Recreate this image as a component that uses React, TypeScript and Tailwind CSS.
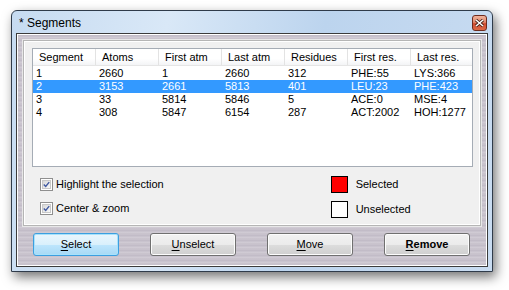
import React from "react";

type Segment = {
    id: number;
    atoms: number;
    firstAtm: number;
    lastAtm: number;
    residues: number;
    firstRes: string;
    lastRes: string;
};

const segments: Segment[] = [
    { id: 1, atoms: 2660, firstAtm: 1, lastAtm: 2660, residues: 312, firstRes: "PHE:55", lastRes: "LYS:366" },
    { id: 2, atoms: 3153, firstAtm: 2661, lastAtm: 5813, residues: 401, firstRes: "LEU:23", lastRes: "PHE:423" },
    { id: 3, atoms: 33, firstAtm: 5814, lastAtm: 5846, residues: 5, firstRes: "ACE:0", lastRes: "MSE:4" },
    { id: 4, atoms: 308, firstAtm: 5847, lastAtm: 6154, residues: 287, firstRes: "ACT:2002", lastRes: "HOH:1277" },
];

const columns = ["Segment", "Atoms", "First atm", "Last atm", "Residues", "First res.", "Last res."];

function CheckBox({ label }: { label: string }) {
    return (
        <div className="flex items-center h-[13px]">
            <div className="w-[13px] h-[13px] border border-[#8f8f8f] bg-white p-px">
                <div className="w-full h-full bg-gradient-to-br from-[#d8d8d8] to-[#f8f8f8] border border-[#c8c8c8] flex items-center justify-center">
                    <svg width="9" height="9" viewBox="0 0 9 9">
                        <path d="M1 4.5 L3.5 7 L8 1.5" fill="none" stroke="#3f58a0" strokeWidth="1.8" />
                    </svg>
                </div>
            </div>
            <span className="ml-[3px]">{label}</span>
        </div>
    );
}

function Button({ label, mnemonic, focused, bold }: { label: string; mnemonic: number; focused?: boolean; bold?: boolean }) {
    const cls = focused
        ? "border-[#3c9fe0] bg-[linear-gradient(180deg,#eaf6fd_0%,#d9f0fc_50%,#bee6fd_50%,#a7d9f5_100%)] shadow-[inset_0_0_0_1px_#a8e2fb]"
        : "border-[#707070] bg-[linear-gradient(180deg,#f2f2f2_0%,#ebebeb_50%,#dddddd_50%,#cfcfcf_100%)] shadow-[inset_0_0_0_1px_#fcfcfc]";
    return (
        <div className={`w-[86px] h-[23px] rounded-[3px] border flex items-center justify-center text-[11px] text-black ${cls} ${bold ? "font-bold" : ""}`}>
            <span>
                {label.slice(0, mnemonic)}
                <span className="underline underline-offset-2">{label[mnemonic]}</span>
                {label.slice(mnemonic + 1)}
            </span>
        </div>
    );
}

export default function App() {
    return (
        <div className="w-[509px] h-[290px] bg-white pt-[10px] pl-[11px] font-['Liberation_Sans',Arial,sans-serif]">
            {/* window frame */}
            <div className="w-[482px] h-[262px] rounded-t-[6px] border border-[#2f3b4a] bg-[linear-gradient(100deg,#c6dbf1_0%,#d9e8f7_30%,#bcd4ee_60%,#c9dcf1_100%)] shadow-[3px_5px_12px_rgba(0,0,0,0.55)] px-[4px] flex flex-col">
                {/* title bar */}
                <div className="h-[22px] flex items-start shrink-0">
                    <span className="mt-[5px] ml-[3px] text-[12px] text-black leading-[14px]">* Segments</span>
                    <div className="ml-auto mt-[4px] mr-[1px] w-[15px] h-[16px] rounded-[3px] border border-[#6e2b1e] bg-[linear-gradient(180deg,#f0b39c_0%,#e0876b_45%,#cf4b30_55%,#dc6a47_100%)] flex items-center justify-center">
                        <svg width="9" height="8" viewBox="0 0 9 8">
                            <path d="M1 1 L8 7 M8 1 L1 7" stroke="#3a1a12" strokeWidth="3" />
                            <path d="M1 1 L8 7 M8 1 L1 7" stroke="#ffffff" strokeWidth="1.6" />
                        </svg>
                    </div>
                </div>
                {/* client area */}
                <div className="h-[234px] border border-[#3b3b3b] shadow-[inset_0_0_0_1px_#ffffff] bg-[repeating-linear-gradient(180deg,#cbc5cf_0px,#bfb9c5_2px,#d3ced7_3px,#c6c0ca_5px)] p-[6px] flex flex-col">
                    {/* group panel */}
                    <div className="h-[186px] border border-[#b5b5b5] shadow-[inset_0_0_0_1px_#ffffff,0_0_0_1px_#e8e8e8] bg-[#f0f0f0] pt-[7px] px-[8px] text-[11px] text-black">
                        {/* list view */}
                        <div className="w-[441px] h-[119px] border border-[#a5acb5] bg-white">
                            <div className="flex h-[17px] border-b border-[#e5e5e5] bg-[linear-gradient(180deg,#ffffff_0%,#ffffff_60%,#f3f4f6_100%)]">
                                {columns.map((c, i) => (
                                    <div key={c} className={`w-[63px] shrink-0 pl-[6px] leading-[17px] ${i < columns.length - 1 ? "border-r border-[#e3e3e3]" : ""}`}>
                                        {c}
                                    </div>
                                ))}
                            </div>
                            <div className="mt-[1px]">
                                {segments.map((s) => (
                                    <div key={s.id} className={`flex h-[13px] leading-[13px] ${s.id === 2 ? "bg-[#3399ff] text-white" : ""}`}>
                                        {[s.id, s.atoms, s.firstAtm, s.lastAtm, s.residues, s.firstRes, s.lastRes].map((v, i) => (
                                            <div key={i} className="w-[63px] shrink-0 pl-[3px]">
                                                {v}
                                            </div>
                                        ))}
                                    </div>
                                ))}
                            </div>
                        </div>
                        {/* options */}
                        <div className="flex mt-[9px]">
                            <div className="flex flex-col gap-[11px] ml-[8px] pt-[2px]">
                                <CheckBox label="Highlight the selection" />
                                <CheckBox label="Center & zoom" />
                            </div>
                            <div className="flex flex-col gap-[8px] ml-[167px]">
                                <div className="flex items-center">
                                    <div className="w-[17px] h-[17px] border border-black bg-[#ff0000]" />
                                    <span className="ml-[8px]">Selected</span>
                                </div>
                                <div className="flex items-center">
                                    <div className="w-[17px] h-[17px] border border-black bg-white" />
                                    <span className="ml-[8px]">Unselected</span>
                                </div>
                            </div>
                        </div>
                    </div>
                    {/* buttons */}
                    <div className="flex gap-[31px] mt-[7px] pl-[10px]">
                        <Button label="Select" mnemonic={0} focused />
                        <Button label="Unselect" mnemonic={0} />
                        <Button label="Move" mnemonic={0} />
                        <Button label="Remove" mnemonic={0} bold />
                    </div>
                </div>
            </div>
        </div>
    );
}
